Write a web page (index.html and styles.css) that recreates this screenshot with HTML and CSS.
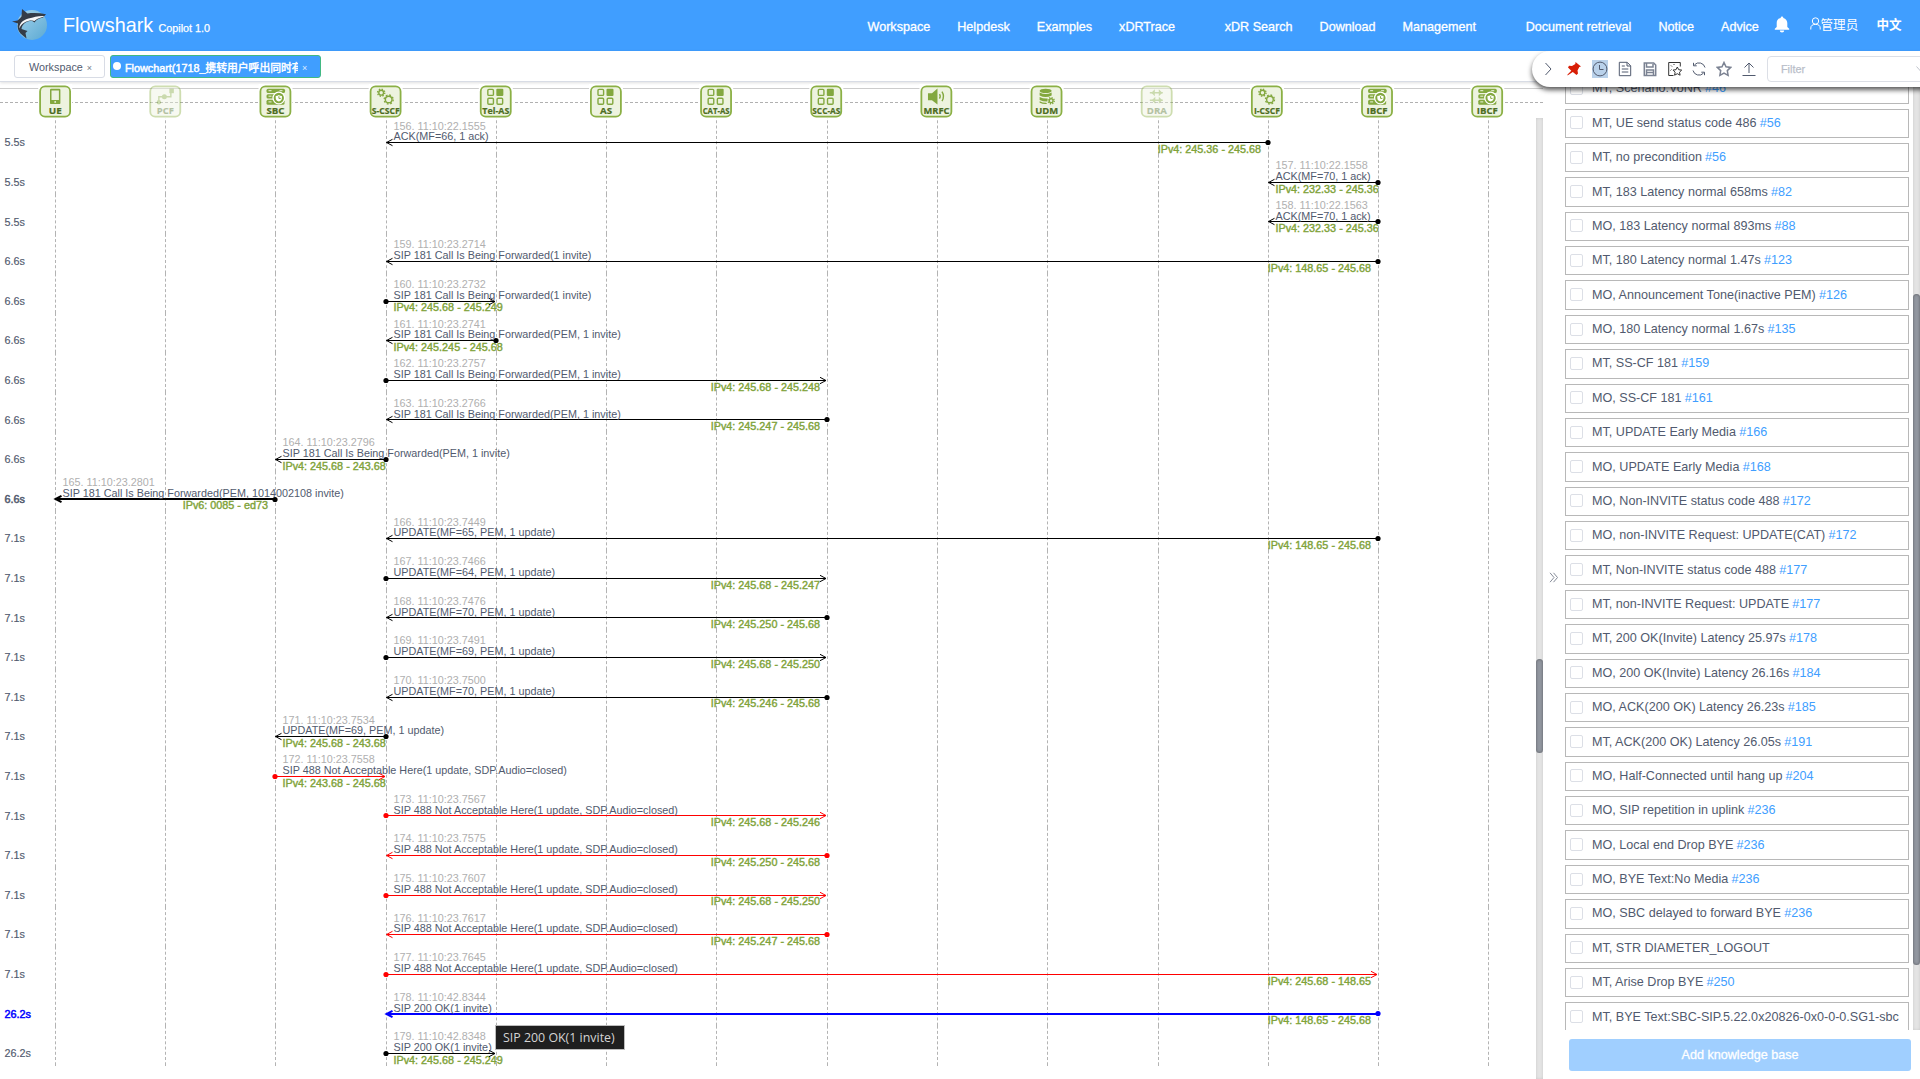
FILE: index.html
```html
<!DOCTYPE html>
<html lang="en">
<head>
<meta charset="utf-8">
<title>Flowshark</title>
<link rel="stylesheet" href="styles.css">
</head>
<body>
<header class="header">
  <svg class="logo" width="36" height="32" viewBox="0 0 36 32">
    <defs><linearGradient id="sea" x1="0" y1="0" x2="1" y2="1"><stop offset="0" stop-color="#a4d3ec"/><stop offset="1" stop-color="#5aa9d3"/></linearGradient></defs>
    <circle cx="20" cy="16" r="15" fill="url(#sea)"/>
    <path d="M0 12.5 5.5 11.5C7.500 9.500 9 8.500 9.500 7.500L10 0 15.500 4.500C21 3.800 28 4 34 5.200L31 8.500C27 9.500 24.500 10.500 22.500 13.500L19.500 11.500C14 12.500 10 15 9.500 20L15.500 22 13.500 24 14.500 29.500 8.500 24.500C6 21.500 5 18 6 14.500Z" fill="#343c48"/>
    <path d="M32.500 7C27 6.500 22 8 16.500 9.500 10 11.500 7 15 7.500 19.500 9 14.500 13.500 12.300 19 11.200L22.500 12C24.500 9.500 29 9 32.500 7Z" fill="#f6f8fa"/>
  </svg>
  <span class="brand">Flowshark</span><span class="version">Copilot 1.0</span>
  <nav class="nav">
    <a>Workspace</a><a>Helpdesk</a><a>Examples</a><a>xDRTrace</a>
    <a class="group">xDR Search</a><a>Download</a><a>Management</a>
    <a class="group">Document retrieval</a><a>Notice</a><a>Advice</a>
  </nav>
  <svg class="bell" width="16" height="17" viewBox="0 0 16 17"><path d="M8 0.500a1.300 1.300 0 0 1 1.300 1.400C12 2.500 13.300 4.700 13.300 7v4l1.900 1.700v1H.8v-1L2.700 11V7c0-2.300 1.300-4.500 4-5.100A1.300 1.300 0 0 1 8 .5zM5.800 14.500h4.400a2.200 2 0 0 1-4.400 0z" fill="#fff"/></svg>
  <span class="user"><svg width="11" height="13" viewBox="0 0 11 13"><g fill="none" stroke="#fff" stroke-width="1"><circle cx="5.500" cy="4" r="3.200"/><path d="M.8 12.500V11C.8 8.500 2.600 7.400 5.500 7.400s4.700 1.100 4.700 3.600v1.500"/></g></svg>管理员</span>
  <span class="lang">中文</span>
</header>

<div class="tabs">
  <div class="tab"><span>Workspace</span><i class="close">×</i></div>
  <div class="tab active"><b class="dot"></b><span class="tab-title">Flowchart(1718_携转用户呼出同时有</span><i class="close">×</i></div>
</div>

<div class="toolbar">
  <svg class="tool" viewBox="0 0 16 16"><path d="M5.500 2 11 8l-5.500 6"/></svg>
  <svg class="tool pin" viewBox="0 0 16 16"><path d="M9.500 1 15 5.500 13.300 6 11.500 9.500 12 12.500 10.500 14 6.800 11 1.500 14.500 1.500 13.500 5.300 9.700 2 6.500 3 4.700 6 5 9.300 3Z"/></svg>
  <span class="tool-on"><svg class="tool" viewBox="0 0 16 16"><circle cx="8" cy="8" r="6.900"/><path d="M7.500 4v4.500h4"/></svg></span>
  <svg class="tool" viewBox="0 0 16 16"><path d="M2.300 1.300h7.900l3.500 3.500v9.900H2.300zM10 1.500V5h3.500M4.800 5h3M4.800 8h6.500M4.800 11h6.500"/></svg>
  <svg class="tool save" viewBox="0 0 16 16"><path d="M2.300 2h9.400l2 2v10.500H2.300zM4.500 2v4h6.500V3M4.500 14V9h7v5M4.500 11.500h7"/></svg>
  <svg class="tool dark" viewBox="0 0 16 16"><path d="M6.500 14.500H1.700v-13h11.600v4M4 4.500l1 1M6.500 3l1 1M3.500 9.500l1-1M10.300 6l1.400 2.700 3 .4-2.200 2.100.6 3-2.800-1.500-2.700 1.500.5-3-2.100-2.100 3-.4z"/></svg>
  <svg class="tool" viewBox="0 0 16 16"><path d="M14 6.500A6.200 6.200 0 0 0 3.500 3.800M2 9.500a6.200 6.200 0 0 0 10.500 2.700M2.500 1.800v3h3.200M13.500 14.200v-3h-3.200"/></svg>
  <svg class="tool star" viewBox="0 0 16 16"><path d="M8 1.500l2 4.300 4.700.6-3.400 3.200.8 4.700L8 12l-4.100 2.300.8-4.700L1.300 6.400 6 5.800z"/></svg>
  <svg class="tool" viewBox="0 0 16 16"><path d="M1.500 14.500h13M8 12V2M3.500 6.500 8 2l4.500 4.500"/></svg>
  <div class="filter"><span>Filter</span><svg width="9" height="6" viewBox="0 0 9 6"><path d="M.5.5l4 4.500 4-4.500"/></svg></div>
</div>

<main class="main">
  <section class="chart">
    <svg id="flow" width="1543" height="997" viewBox="0 82 1543 997"></svg>
    <div class="track chart-track"><div class="thumb"></div></div>
    <div class="tooltip">SIP 200 OK(1 invite)</div>
  </section>
  <aside class="side">
    <div class="fold"><svg width="10" height="11" viewBox="0 0 10 11"><path d="M1 .8l4 4.700-4 4.700M4.500.8l4 4.700-4 4.700"/></svg></div>
    <div class="knowledge">
      <ul class="list" id="list"></ul>
      <button class="add">Add knowledge base</button>
    </div>
    <div class="side-scroll"><div class="track side-track"><div class="thumb"></div></div></div>
  </aside>
</main>
<script src="app.js"></script>
</body>
</html>
```

FILE: styles.css
```css
* { box-sizing: border-box; }
body {
  margin: 0;
  width: 1920px;
  height: 1079px;
  overflow: hidden;
  position: relative;
  background: #fff;
  color: #515a6e;
  font-family: "Liberation Sans", Arial, "Noto Sans CJK SC", sans-serif;
  font-size: 12.6px;
}

.header {
  height: 51px;
  padding-left: 12px;
  display: flex;
  align-items: center;
  background: #409eff;
  color: #fff;
  white-space: nowrap;
}
.logo { margin: 0 15px 1px 0; }
.brand { width: 95.500px; font-size: 19.8px; }
.version { width: 709px; padding-top: 5px; font-size: 10.8px; -webkit-text-stroke: 0.25px; }
.nav { width: 906px; display: flex; gap: 27px; padding-top: 2px; -webkit-text-stroke: 0.3px; }
.nav .group { margin-left: 22.6px; }
.bell { margin-bottom: 3px; }
.user { width: 67px; margin: 0 0 4px 20px; display: flex; align-items: center; }
.lang { font-weight: 700; margin-bottom: 4px; }

.tabs {
  height: 31px;
  padding: 4px 0 0 14px;
  display: flex;
  gap: 5px;
  border-bottom: 1px solid #d8dce5;
  box-shadow: 0 1px 3px rgba(0, 0, 0, 0.13);
  font-size: 10.8px;
}
.tab {
  width: 91px;
  height: 23px;
  padding-left: 14px;
  display: flex;
  align-items: center;
  border: 1px solid #d8dce5;
  border-radius: 3px;
  white-space: nowrap;
}
.tab.active {
  width: 211px;
  padding-left: 2px;
  background: #409eff;
  border-color: #42b983;
  color: #fff;
}
.dot { width: 8px; height: 8px; margin: 0 4px 1px 0; border-radius: 50%; background: #fff; }
.tab-title { width: 173px; overflow: hidden; -webkit-text-stroke: 0.45px; }
.close { margin: 2px 0 0 4px; font-style: normal; font-size: 9px; opacity: 0.8; }

.toolbar {
  position: absolute;
  left: 1532px;
  top: 51px;
  width: 420px;
  height: 36px;
  z-index: 2;
  padding-left: 8px;
  display: flex;
  align-items: center;
  gap: 9px;
  background: #fff;
  border-radius: 18px 0 0 18px;
  box-shadow: 0 3px 5px rgba(0, 0, 0, 0.65);
  clip-path: inset(0 0 -14px -14px);
}
.tool { width: 16px; height: 16px; flex: none; fill: none; stroke: #515a6e; stroke-width: 1; }
.pin { fill: #d81e06; stroke: none; margin: 0 1px 0 1px; }
.save, .star { stroke: #7b8292; stroke-width: 1.5; }
.dark { stroke: #333; margin-right: -1px; }
.tool-on { width: 16px; height: 18px; display: flex; align-items: center; background: #b9d1ea; }
.filter {
  width: 180px;
  height: 26px;
  margin-left: 1px;
  padding-left: 13px;
  display: flex;
  align-items: center;
  gap: 111px;
  border: 1px solid #dcdfe6;
  border-radius: 4px;
  color: #b9bec9;
  font-size: 10.8px;
  -webkit-text-stroke: 0.25px;
}
.filter svg { fill: none; stroke: #c0c4cc; }

.main { height: 997px; display: grid; grid-template-columns: 1543px 377px; }
.chart { position: relative; }
.chart svg { display: block; }
.track { background: #e4e4e4; box-shadow: inset 0 0 3px rgba(0, 0, 0, 0.13); }
.thumb { border-radius: 4px; background: #9297a0; box-shadow: inset 0 0 3px rgba(0, 0, 0, 0.4); }
.chart-track { position: absolute; left: 1536px; top: 36px; width: 7px; height: 961px; padding-top: 541px; }
.chart-track .thumb { height: 94px; }
.tooltip {
  position: absolute;
  left: 495px;
  top: 943px;
  width: 130px;
  height: 25px;
  padding-left: 7px;
  border: 1px solid #bdbdbd;
  background: #1f1f1f;
  color: #d4d4d4;
  font: 12.4px/23px "Open Sans", "Noto Sans", sans-serif;
  white-space: nowrap;
}

.side { display: grid; grid-template-columns: 22px 344px 11px; }
.fold { padding: 490px 0 0 6px; }
.fold svg { fill: none; stroke: #858b98; display: block; }
.list { height: 948px; margin: 0; padding: 0; overflow: hidden; list-style: none; display: flex; flex-direction: column; }
.item {
  height: 29.385px;
  margin-bottom: 5px;
  flex: none;
  display: flex;
  align-items: center;
  padding: 0 0 1px 4px;
  border: 1px solid #b8b8b8;
  white-space: nowrap;
}
.item:first-child { margin-top: -7.8px; }
.check { width: 13px; height: 13px; margin-right: 9px; border: 1px solid #dcdfe6; border-radius: 2px; }
.ref { margin-left: 3.2px; color: #409eff; }
.add {
  width: 342px;
  height: 32px;
  margin: 9px 0 0 4px;
  padding: 0;
  border: 0;
  border-radius: 3px;
  background: #a0cfff;
  color: #fff;
  font: 12.6px "Liberation Sans", Arial, sans-serif;
  -webkit-text-stroke: 0.3px;
}
.side-scroll { padding-left: 4px; }
.side-track { width: 7px; height: 948px; padding-top: 212px; }
.side-track .thumb { height: 671px; }

.flow-text { font-size: 10.8px; fill: #515a6e; }
.stamp { font-size: 10.8px; fill: #b0b0b0; }
.addr { font-size: 10.8px; fill: #7fa33a; stroke: #7fa33a; stroke-width: 0.4px; }
.time { font-size: 10.8px; fill: #515a6e; stroke: #515a6e; stroke-width: 0.15px; }
.time.strong { stroke-width: 0.5px; }
.time.selected { fill: #00f; stroke: #00f; stroke-width: 0.5px; }
.life { stroke: #b3b3b3; stroke-dasharray: 6 2.200 3 2.230 3 2.230 3 2.230 3 2.230 3 2.230 3 2.240; stroke-dashoffset: 5.900; }
.rail { stroke: #b0b0b0; stroke-dasharray: 3 2; }
.edge { stroke: #ccc; }
.node-name { font: 700 9.2px "Open Sans", "Noto Sans", sans-serif; fill: #4d6d1f; stroke: #4d6d1f; stroke-width: 0.2px; text-anchor: middle; }
.glyph { fill: #83a83f; stroke: none; }
.glyph-line { fill: none; stroke: #83a83f; stroke-width: 1.4; }
```

FILE: app.js
```js
const G = 'class="glyph"', L = 'class="glyph-line"';
const gear = (x, y, r) =>
  `<circle cx="${x}" cy="${y}" r="${r}" ${L}/><circle cx="${x}" cy="${y}" r="${r + 1.2}" ${L} stroke-dasharray="${(r + 1.2) * 0.3927} ${(r + 1.2) * 0.3927}"/>`;
const glyphs = {
  phone: `<path ${G} fill-rule="evenodd" d="M12 3.500h8q1.200 0 1.200 1.200v13q0 1.200-1.200 1.200h-8q-1.200 0-1.200-1.200v-13q0-1.200 1.200-1.200zm.3 1.800v9.400h7.400v-9.400z"/><circle cx="16" cy="16.700" r=".9" fill="#edf3df"/>`,
  policy: `<rect x="20" y="3.500" width="4.500" height="4.500" ${G}/><circle cx="15" cy="11.500" r="2.500" ${G}/><circle cx="9.500" cy="17" r="2.200" ${G}/><path ${L} d="M9.500 16v-4.500h5M15.500 11.500h6V7"/>`,
  shield: `<rect x="7" y="3.500" width="18.500" height="4.300" rx="1.500" ${G}/><rect x="7" y="9" width="14" height="4.300" rx="1.500" ${G}/><rect x="7" y="14.500" width="18" height="5" rx="1.500" ${G}/><path d="M9 5.500h3M20 5.500h3M9 11h3M9 16.700h3" stroke="#edf3df"/><circle cx="19.300" cy="12.800" r="5.800" fill="#83a83f" stroke="#fff" stroke-width="1.300"/><path d="M16.200 10.700q1.900 0 3.100-1 1.200 1 3.100 1v2q0 2.600-3.100 3.600-3.100-1-3.100-3.600z" fill="#fff"/><path d="M19.400 11v2.200h1.800" stroke="#83a83f" fill="none"/>`,
  gears: gear(11.500, 7.500, 2.400) + gear(19, 14.300, 3.300),
  apps: `<rect x="8" y="4.200" width="5.600" height="6" rx="1" ${L}/><rect x="16.500" y="3.500" width="7" height="7.400" rx="1" ${G}/><rect x="8" y="13" width="5.600" height="6" rx="1" ${L}/><rect x="17.200" y="13" width="5.600" height="6" rx="1" ${L}/>`,
  media: `<path ${G} d="M7.500 8h4l5.500-4.800v16L11.500 15h-4z"/><path ${L} d="M19 9q1.500 2 0 4.500M21.500 6.500q3 4.700 0 9.500"/>`,
  data: `<ellipse cx="15" cy="5.700" rx="6" ry="2.200" ${G}/><path ${G} d="M9 7.300q6 3 12 0v3q-6 3-12 0zM9 11.700q4 2 8 1.500l-.5 3q-4.500 0-7.500-1.500zM9 16q3 1.500 6.500 1.500l1 1.300q-4 .5-7.500-1.300z"/>` + gear(20.500, 15.500, 1.900),
  route: `<path ${L} stroke-width="2" d="M9 7.500h13M9 15h13"/><path ${G} d="M14 4v7l-3.500-3.500zM18 4v7l3.500-3.500zM14.500 11.500v7l-3.500-3.500zM18 11.500v7l3.500-3.500z"/>`
};
const nodes = [['UE', 'phone'], ['PCF', 'policy', 1], ['SBC', 'shield'], ['S-CSCF', 'gears'], ['Tel-AS', 'apps'], ['AS', 'apps'], ['CAT-AS', 'apps'], ['SCC-AS', 'apps'], ['MRFC', 'media'], ['UDM', 'data'], ['DRA', 'route', 1], ['I-CSCF', 'gears'], ['IBCF', 'shield'], ['IBCF', 'shield']];
const nameWidth = { UE: 13, PCF: 17, SBC: 18, 'S-CSCF': 28, 'Tel-AS': 27, AS: 12, 'CAT-AS': 27, 'SCC-AS': 28, MRFC: 26, UDM: 23, DRA: 20, 'I-CSCF': 26, IBCF: 21 };
const lanes = [55.5, 165.5, 275.5, 386.5, 496.5, 606.5, 716.5, 827.5, 937.5, 1047.5, 1158.5, 1268.5, 1378.5, 1488.5];

const call = 'SIP 181 Call Is Being Forwarded', nok = 'SIP 488 Not Acceptable Here(1 update, SDP.Audio=closed)';
// time, frame clock, from lane, to lane, message, address pair, colour, line width
const messages = [
  ['5.5s', '22.1555', 11, 3, 'ACK(MF=66, 1 ack)', '4: 245.36 - 245.68'],
  ['5.5s', '22.1558', 12, 11, 'ACK(MF=70, 1 ack)', '4: 232.33 - 245.36'],
  ['5.5s', '22.1563', 12, 11, 'ACK(MF=70, 1 ack)', '4: 232.33 - 245.36'],
  ['6.6s', '23.2714', 12, 3, call + '(1 invite)', '4: 148.65 - 245.68'],
  ['6.6s', '23.2732', 3, 4, call + '(1 invite)', '4: 245.68 - 245.249'],
  ['6.6s', '23.2741', 4, 3, call + '(PEM, 1 invite)', '4: 245.245 - 245.68'],
  ['6.6s', '23.2757', 3, 7, call + '(PEM, 1 invite)', '4: 245.68 - 245.248'],
  ['6.6s', '23.2766', 7, 3, call + '(PEM, 1 invite)', '4: 245.247 - 245.68'],
  ['6.6s', '23.2796', 3, 2, call + '(PEM, 1 invite)', '4: 245.68 - 243.68'],
  ['6.6s', '23.2801', 2, 0, call + '(PEM, 1014002108 invite)', '6: 0085 - ed73', '#000', 2],
  ['7.1s', '23.7449', 12, 3, 'UPDATE(MF=65, PEM, 1 update)', '4: 148.65 - 245.68'],
  ['7.1s', '23.7466', 3, 7, 'UPDATE(MF=64, PEM, 1 update)', '4: 245.68 - 245.247'],
  ['7.1s', '23.7476', 7, 3, 'UPDATE(MF=70, PEM, 1 update)', '4: 245.250 - 245.68'],
  ['7.1s', '23.7491', 3, 7, 'UPDATE(MF=69, PEM, 1 update)', '4: 245.68 - 245.250'],
  ['7.1s', '23.7500', 7, 3, 'UPDATE(MF=70, PEM, 1 update)', '4: 245.246 - 245.68'],
  ['7.1s', '23.7534', 3, 2, 'UPDATE(MF=69, PEM, 1 update)', '4: 245.68 - 243.68'],
  ['7.1s', '23.7558', 2, 3, nok, '4: 243.68 - 245.68', '#f00'],
  ['7.1s', '23.7567', 3, 7, nok, '4: 245.68 - 245.246', '#f00'],
  ['7.1s', '23.7575', 7, 3, nok, '4: 245.250 - 245.68', '#f00'],
  ['7.1s', '23.7607', 3, 7, nok, '4: 245.68 - 245.250', '#f00'],
  ['7.1s', '23.7617', 7, 3, nok, '4: 245.247 - 245.68', '#f00'],
  ['7.1s', '23.7645', 3, 12, nok, '4: 245.68 - 148.65', '#f00'],
  ['26.2s', '42.8344', 12, 3, 'SIP 200 OK(1 invite)', '4: 148.65 - 245.68', '#00f', 2],
  ['26.2s', '42.8348', 3, 4, 'SIP 200 OK(1 invite)', '4: 245.68 - 245.249']
];

let out = '<line class="edge" x1="0" x2="1543" y1="88.500" y2="88.500"/><line class="rail" x1="0" x2="1543" y1="102.500" y2="102.500"/>';
nodes.forEach(([name, glyph, off], i) => {
  const x = lanes[i], left = 39.2 + 110.16 * i;
  out += `<line class="life" x1="${x}" x2="${x}" y1="118" y2="1066"/>`;
  out += off ? '' : `<rect x="${left - 1}" y="84" width="34" height="34" fill="#fff"/>`;
  out += `<g transform="translate(${left} 85.500)"${off ? ' opacity=".42"' : ''}><rect x=".9" y=".9" width="30" height="30.300" rx="5" fill="#edf3df" stroke="#8bb045" stroke-width="1.800"/><g transform="translate(0 -.3)">${glyphs[glyph]}</g><text class="node-name" x="16" y="28" textLength="${nameWidth[name]}" lengthAdjust="spacingAndGlyphs">${name}</text></g>`;
});
const step = (start, i) => Math.round(start + 39.6 * i);
messages.forEach(([time, clock, from, to, text, addr, color = '#000', width = 1], i) => {
  const y = Math.floor(142.601 + 39.6 * i) + 0.5, a = lanes[from], b = lanes[to];
  const lo = Math.min(a, b), hi = Math.max(a, b), dir = b > a ? -1 : 1, tip = b > a ? b - 1.5 : b;
  const one = Math.abs(from - to) === 1, ly = width === 2 ? step(142.6, i) : y;
  const state = color === '#00f' ? ' selected' : width === 2 ? ' strong' : '';
  out += `<text class="time${state}" x="4.500" y="${step(146.4, i)}">${time}</text>
    <text class="stamp" x="${lo + 7}" y="${step(129.6, i)}">${156 + i}. 11:10:${clock}</text>
    <text class="addr" x="${one ? lo + 7 : hi - 7.5}" y="${step(153, i)}" text-anchor="${one ? 'start' : 'end'}">IPv${addr}</text>
    <g stroke="${color}" fill="none" stroke-width="${width}"><path d="M${a} ${ly}H${tip}"/><path d="M${tip + 6 * dir} ${ly - 3.2}L${tip} ${ly}L${tip + 6 * dir} ${ly + 3.2}"/></g>
    <circle cx="${a - 0.5}" cy="${y}" r="2.600" fill="${color}"/>
    <text class="flow-text" x="${lo + 7}" y="${step(140.3, i)}">${text}</text>`;
});
document.getElementById('flow').innerHTML = out;

const items = ['MT, Scenario:VoNR#46', 'MT, UE send status code 486#56', 'MT, no precondition#56', 'MT, 183 Latency normal 658ms#82', 'MO, 183 Latency normal 893ms#88', 'MT, 180 Latency normal 1.47s#123', 'MO, Announcement Tone(inactive PEM)#126', 'MO, 180 Latency normal 1.67s#135', 'MT, SS-CF 181#159', 'MO, SS-CF 181#161', 'MT, UPDATE Early Media#166', 'MO, UPDATE Early Media#168', 'MO, Non-INVITE status code 488#172', 'MO, non-INVITE Request: UPDATE(CAT)#172', 'MT, Non-INVITE status code 488#177', 'MT, non-INVITE Request: UPDATE#177', 'MT, 200 OK(Invite) Latency 25.97s#178', 'MO, 200 OK(Invite) Latency 26.16s#184', 'MO, ACK(200 OK) Latency 26.23s#185', 'MT, ACK(200 OK) Latency 26.05s#191', 'MO, Half-Connected until hang up#204', 'MO, SIP repetition in uplink#236', 'MO, Local end Drop BYE#236', 'MO, BYE Text:No Media#236', 'MO, SBC delayed to forward BYE#236', 'MT, STR DIAMETER_LOGOUT', 'MT, Arise Drop BYE#250', 'MT, BYE Text:SBC-SIP.5.22.0x20826-0x0-0-0.SG1-sbc'];
document.getElementById('list').innerHTML = items.map(item => {
  const [text, ref] = item.split('#');
  return `<li class="item"><span class="check"></span><span>${text}</span>${ref ? `<span class="ref">#${ref}</span>` : ''}</li>`;
}).join('');
```
